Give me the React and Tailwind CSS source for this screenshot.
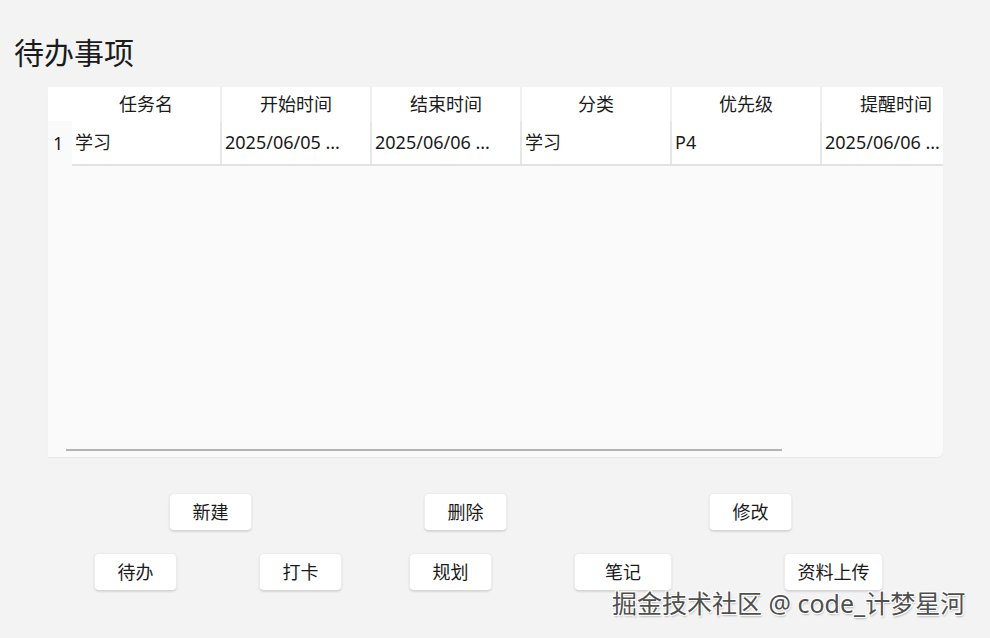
import React from 'react';

const columns = ['任务名', '开始时间', '结束时间', '分类', '优先级', '提醒时间'];
const rows = [['学习', '2025/06/05 ...', '2025/06/06 ...', '学习', 'P4', '2025/06/06 ...']];

const Btn = ({ label, className = '' }) => (
    <button
        className={`h-[38px] rounded-[5px] bg-white text-[18px] text-[#1a1a1a] shadow-[0_1px_2px_rgba(0,0,0,0.12)] border border-[#ececec] border-b-[#d6d6d6] ${className}`}
    >
        {label}
    </button>
);

export default function App() {
    return (
        <div
            className="relative w-[990px] h-[638px] overflow-hidden bg-[#f3f3f3] text-[#1a1a1a]"
            style={{ fontFamily: '"Noto Sans", "Noto Sans CJK SC", sans-serif' }}
        >
            {/* Title */}
            <div className="pt-[32px] pl-[14px] text-[30px] leading-[42px] text-[#1b1b1b]">待办事项</div>

            {/* Table */}
            <div className="ml-[48px] mt-[13px] w-[895px] h-[370px] bg-[#fafafa] rounded-br-[6px] overflow-hidden flex flex-col shadow-[0_1px_1px_rgba(0,0,0,0.04)]">
                <div className="flex h-[34px] shrink-0 bg-white">
                    <div className="w-[24px] shrink-0" />
                    {columns.map((c) => (
                        <div
                            key={c}
                            className="w-[150px] shrink-0 flex items-center justify-center text-[18px] border-r-2 border-[#f0f0f0]"
                        >
                            {c}
                        </div>
                    ))}
                </div>
                {rows.map((r, i) => (
                    <div key={i} className="flex h-[45px] shrink-0">
                        <div className="w-[24px] shrink-0 flex items-center pl-[5px] text-[18px]">{i + 1}</div>
                        <div className="flex border-b-2 border-[#e2e2e2]">
                            {r.map((v, j) => (
                                <div
                                    key={j}
                                    className="w-[150px] shrink-0 flex items-center pl-[3px] bg-white text-[18px] whitespace-nowrap overflow-hidden border-r-2 border-[#e6e6e6]"
                                >
                                    {v}
                                </div>
                            ))}
                        </div>
                    </div>
                ))}
                <div className="flex-1" />
                <div className="ml-[18px] mb-[6px] w-[716px] h-[2px] bg-[#b3b3b3]" />
            </div>

            {/* Buttons */}
            <div className="flex mt-[36px]">
                <Btn label="新建" className="ml-[169px] w-[83px]" />
                <Btn label="删除" className="ml-[172px] w-[83px]" />
                <Btn label="修改" className="ml-[202px] w-[83px]" />
            </div>
            <div className="flex mt-[22px]">
                <Btn label="待办" className="ml-[94px] w-[83px]" />
                <Btn label="打卡" className="ml-[82px] w-[83px]" />
                <Btn label="规划" className="ml-[67px] w-[83px]" />
                <Btn label="笔记" className="ml-[82px] w-[98px]" />
                <Btn label="资料上传" className="ml-[112px] w-[99px]" />
            </div>

            {/* Watermark */}
            <div
                className="absolute left-[612px] top-[585px] text-[25px] leading-[36px] text-[#4f4f4f] whitespace-nowrap"
                style={{ textShadow: '1px 1px 0 #fff, -1px -1px 0 #fff, 1px -1px 0 #fff, -1px 1px 0 #fff, 1px 2px 2px rgba(0,0,0,0.25)' }}
            >
                掘金技术社区 @ code_计梦星河
            </div>
        </div>
    );
}
